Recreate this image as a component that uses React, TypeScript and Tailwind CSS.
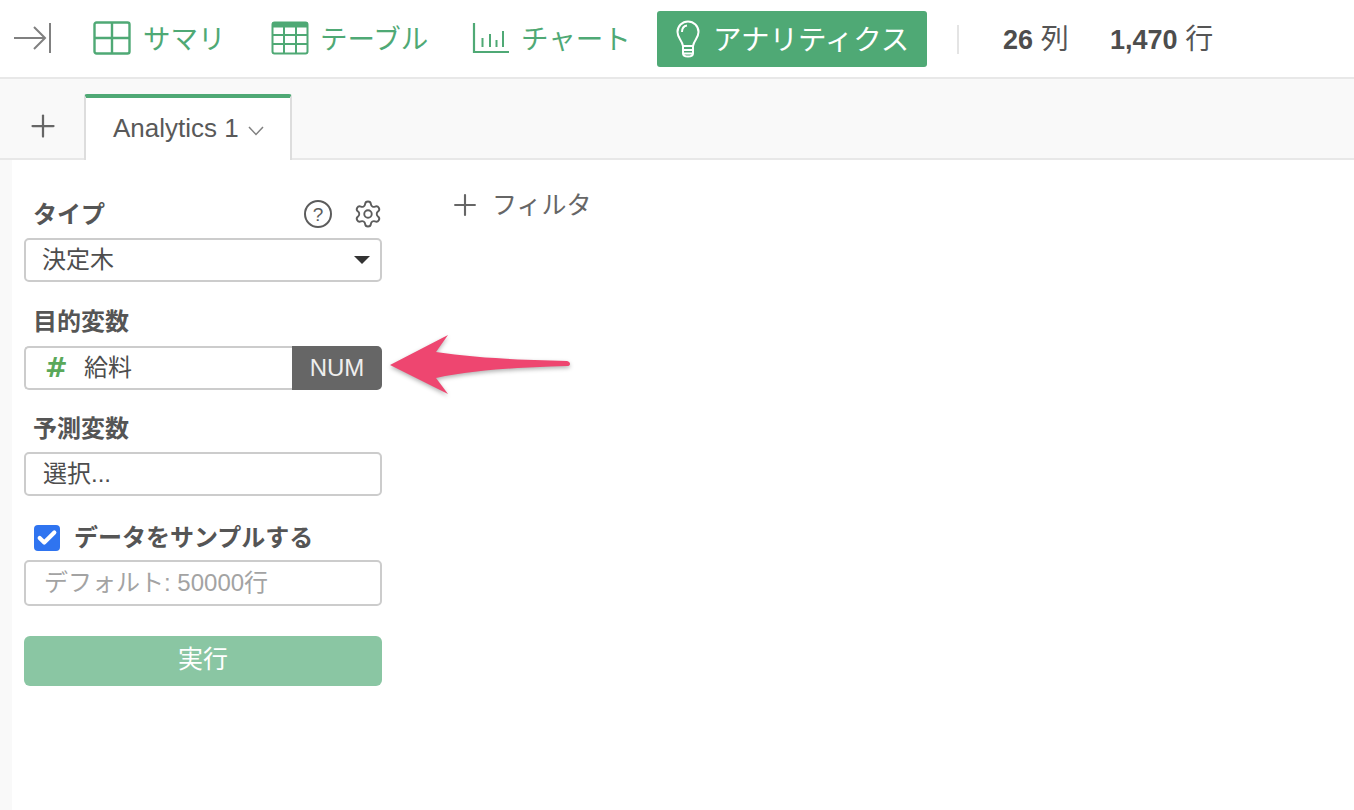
import { Check, Plus, Settings } from "lucide-react";

const FONT = "font-['Liberation_Sans','Noto_Sans_CJK_JP',sans-serif]";

function SummaryIcon() {
  return (
    <svg width="38" height="34" viewBox="0 0 38 34" fill="none" stroke="#4fa975" strokeWidth="2.4">
      <rect x="1.5" y="1.5" width="35" height="31" rx="2" />
      <path d="M19 1.5V32.5M1.5 17H36.5" />
    </svg>
  );
}

function TableIcon() {
  return (
    <svg width="38" height="34" viewBox="0 0 38 34" fill="none" stroke="#4fa975" strokeWidth="2">
      <rect x="1.5" y="1.5" width="35" height="31" rx="2" />
      <path d="M1.5 4H36.5" strokeWidth="5" />
      <path d="M13 6V32.5M25 6V32.5M1.5 14H36.5M1.5 23H36.5" />
    </svg>
  );
}

function ChartIcon() {
  return (
    <svg width="38" height="34" viewBox="0 0 38 34" fill="none" stroke="#4fa975" strokeWidth="2">
      <path d="M2 2V31H37" strokeWidth="2.2" />
      <path d="M10.500 17V26M18 13V26M24.500 19V26M31 10V26" />
    </svg>
  );
}

function BulbIcon() {
  return (
    <svg width="24" height="38" viewBox="0 0 24 38" fill="none" stroke="#ffffff" strokeWidth="2">
      <path d="M7 26C6 20 1.500 18 1.500 12A10.500 10.500 0 0 1 22.500 12C22.500 18 18 20 17 26Z" />
      <path d="M6 12C6 8.500 8 6 11 5.500" />
      <path d="M7 26V33.500C7 35.500 9 36.500 12 36.500C15 36.500 17 35.500 17 33.500V26M7 30H17M7 33.500H17" />
    </svg>
  );
}

function FieldLabel({ children }: { children: string }) {
  return <div className="pl-[9px] text-[24px] leading-[34px] font-bold text-[#555555]">{children}</div>;
}

export default function App() {
  return (
    <div className={`${FONT} relative min-h-[810px] bg-white text-[#555555] overflow-hidden`}>
      {/* Top nav */}
      <div className="h-[79px] border-b-2 border-[#e8e8e8] flex items-start pl-[14px] pt-[11px]">
        <svg width="37" height="30" viewBox="0 0 37 30" fill="none" stroke="#808080" strokeWidth="2" className="mt-[12px] shrink-0">
          <path d="M0 15H30M20 4L31 15L20 26" />
          <path d="M36 0V30" />
        </svg>
        <div className="mt-[10px] ml-[42px] shrink-0"><SummaryIcon /></div>
        <span className="ml-[12px] w-[82px] mt-[9px] text-[27.500px] leading-[40px] text-[#4fa975] whitespace-nowrap">サマリ</span>
        <div className="mt-[10px] ml-[46px] shrink-0"><TableIcon /></div>
        <span className="ml-[11px] w-[108px] mt-[9px] text-[27.500px] leading-[40px] text-[#4fa975] whitespace-nowrap">テーブル</span>
        <div className="mt-[10px] ml-[44px] shrink-0"><ChartIcon /></div>
        <span className="ml-[11px] w-[113px] mt-[9px] text-[27.500px] leading-[40px] text-[#4fa975] whitespace-nowrap">チャート</span>
        <div className="ml-[23px] w-[270px] h-[56px] bg-[#4fa975] rounded-[3px] flex items-center pl-[19px] text-white shrink-0">
          <BulbIcon />
          <span className="ml-[13px] mt-[2px] text-[28.500px] leading-[40px] whitespace-nowrap">アナリティクス</span>
        </div>
        <div className="ml-[30px] mt-[14px] w-[2px] h-[29px] bg-[#e4e4e4] shrink-0" />
        <div className="ml-[44px] mt-[9px] text-[28px] leading-[40px] whitespace-nowrap w-[107px]">
          <b className="text-[27px] text-[#4d4d4d]">26</b> 列
        </div>
        <div className="mt-[9px] text-[28px] leading-[40px] whitespace-nowrap">
          <b className="text-[27px] text-[#4d4d4d]">1,470</b> 行
        </div>
      </div>

      {/* Tab strip */}
      <div className="h-[81px] bg-[#f9f9f9] border-b-2 border-[#e8e8e8] flex items-start pt-[15px]">
        <div className="w-[85px] h-[64px] flex items-center justify-center text-[#666666] shrink-0">
          <Plus size={36} strokeWidth={1.500} />
        </div>
        <div className="relative w-[208px] h-[66px] bg-white border-x-2 border-[#dddddd] border-t-4 border-t-[#4fa975] rounded-t-[3px] flex items-center pl-[27px] -ml-[1px] shrink-0">
          <span className="text-[26px] leading-[34px] -mt-[2px] text-[#595959] whitespace-nowrap">Analytics 1</span>
          <svg width="16" height="10" viewBox="0 0 16 10" fill="none" stroke="#808080" strokeWidth="1.500" className="ml-[9px] mt-[4px]">
            <path d="M1 1L8 8.500L15 1" />
          </svg>
        </div>
      </div>

      {/* Body */}
      <div className="flex min-h-[650px]">
        <div className="w-[12px] bg-[#f9f9f9] shrink-0" />
        <div className="w-[358px] ml-[12px] pt-[38px] shrink-0">
          <div className="flex items-center justify-between h-[34px]">
            <FieldLabel>タイプ</FieldLabel>
            <div className="flex items-center gap-[22px] text-[#5c5c5c] -mt-[2px]">
              <div className="w-[28px] h-[28px] rounded-full border-2 border-[#5c5c5c] flex items-center justify-center text-[19px] leading-none">?</div>
              <Settings size={30} strokeWidth={1.500} className="-mr-[1px] -ml-[1px]" />
            </div>
          </div>
          <div className="mt-[6px] h-[44px] border-2 border-[#cccccc] rounded-[5px] flex items-center justify-between pl-[16px] pr-[10px]">
            <span className="text-[24px] leading-[32px] text-[#4d4d4d]">決定木</span>
            <div className="w-0 h-0 border-x-[8px] border-x-transparent border-t-[8px] border-t-[#333333]" />
          </div>

          <div className="mt-[23px]"><FieldLabel>目的変数</FieldLabel></div>
          <div className="mt-[7px] h-[44px] flex">
            <div className="flex-1 border-y-2 border-l-2 border-[#cccccc] rounded-l-[5px] flex items-center">
              <span className="ml-[19px] w-[39px] font-['DejaVu_Sans',sans-serif] text-[27px] leading-[32px] font-bold text-[#5aa85a] shrink-0">#</span>
              <span className="text-[24px] leading-[32px] text-[#4d4d4d]">給料</span>
            </div>
            <div className="w-[90px] bg-[#666666] rounded-r-[5px] text-[#eeeeee] text-[24px] flex items-center justify-center shrink-0">NUM</div>
          </div>

          <div className="mt-[22px]"><FieldLabel>予測変数</FieldLabel></div>
          <div className="mt-[6px] h-[44px] border-2 border-[#cccccc] rounded-[5px] flex items-center pl-[17px]">
            <span className="text-[24px] leading-[32px] text-[#4d4d4d]">選択...</span>
          </div>

          <div className="mt-[25px] h-[34px] flex items-center pl-[10px]">
            <div className="w-[26px] h-[26px] rounded-[4px] bg-[#2f74f0] flex items-center justify-center text-white shrink-0">
              <Check size={22} strokeWidth={4.500} />
            </div>
            <span className="ml-[14px] text-[24px] leading-[34px] font-bold text-[#555555] whitespace-nowrap">データをサンプルする</span>
          </div>
          <div className="mt-[5px] h-[46px] border-2 border-[#cccccc] rounded-[5px] flex items-center pl-[18px]">
            <span className="text-[24px] leading-[32px] text-[#a3a3a3] whitespace-nowrap">デフォルト: 50000行</span>
          </div>

          <div className="mt-[30px] h-[50px] rounded-[6px] bg-[#8ac6a3] flex items-center justify-center text-white text-[25px] pb-[2px]">実行</div>
        </div>

        <div className="ml-[66px] pt-[25px] flex items-center self-start text-[#666666]">
          <Plus size={34} strokeWidth={1.500} />
          <span className="ml-[10px] text-[25px] leading-[40px] whitespace-nowrap">フィルタ</span>
        </div>
      </div>

      {/* Annotation arrow */}
      <svg width="200" height="80" viewBox="0 0 200 80" className="absolute left-[384px] top-[330px] drop-shadow-[0_2px_2px_rgba(0,0,0,0.3)]">
        <path d="M6 35L64 5L52 22C90 28 140 30 183 31C187 32 187 36 183 36C140 37 90 40 52 48L64 64Z" fill="#ee4670" />
      </svg>
    </div>
  );
}
